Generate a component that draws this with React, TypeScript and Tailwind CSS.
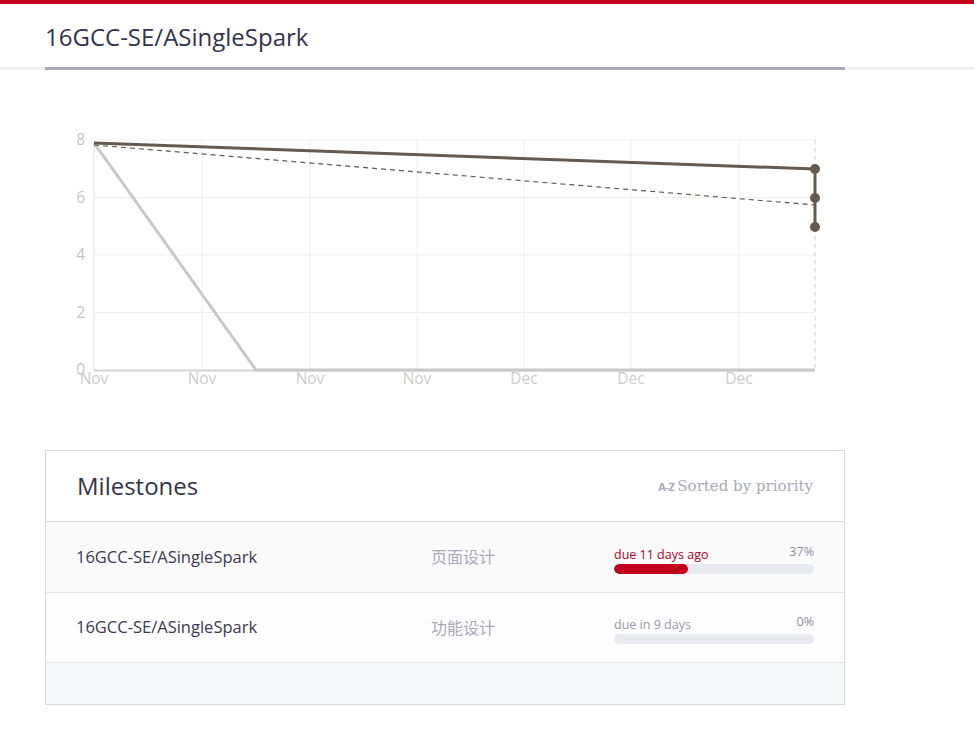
import React from "react";

const milestones = [
  { repo: "16GCC-SE/ASingleSpark", name: "页面设计", due: "due 11 days ago", overdue: true, pct: 37 },
  { repo: "16GCC-SE/ASingleSpark", name: "功能设计", due: "due in 9 days", overdue: false, pct: 0 },
];

// chart coords are page coords minus the svg origin (45, 100)
const X0 = 49;
const X1 = 770;
const yFor = (v: number) => 269 - v * 28.75;
const xTicks = [49, 157, 265, 372, 479, 586, 694];
const xLabels = ["Nov", "Nov", "Nov", "Nov", "Dec", "Dec", "Dec"];

function Burndown() {
  return (
    <svg width={800} height={300} className="block" style={{ fontFamily: "'Open Sans', sans-serif" }}>
      {/* grid */}
      {[8, 6, 4, 2].map((v) => (
        <line key={v} x1={X0} x2={X1} y1={yFor(v)} y2={yFor(v)} stroke="#efefef" strokeWidth={1} />
      ))}
      {xTicks.slice(1).map((x) => (
        <line key={x} x1={x} x2={x} y1={yFor(8)} y2={yFor(0)} stroke="#efefef" strokeWidth={1} />
      ))}
      <line x1={X1} x2={X1} y1={yFor(8)} y2={yFor(0)} stroke="#cfcfcf" strokeWidth={1} strokeDasharray="4 4" />
      {/* axes */}
      <line x1={X0} x2={X0} y1={yFor(8)} y2={yFor(0)} stroke="#e4e4e4" strokeWidth={1} />
      <line x1={X0} x2={X1} y1={yFor(0) + 0.5} y2={yFor(0) + 0.5} stroke="#d4d4d4" strokeWidth={2} />
      {/* y labels */}
      {[8, 6, 4, 2, 0].map((v) => (
        <text key={v} x={40} y={yFor(v) + 5} textAnchor="end" fontSize={15.5} fill="#c6c6c6">
          {v}
        </text>
      ))}
      {/* x labels */}
      {xTicks.map((x, i) => (
        <text key={x} x={x} y={283} textAnchor="middle" fontSize={15.5} fill="#cdcdcd">
          {xLabels[i]}
        </text>
      ))}
      {/* actual (light) */}
      <polyline points={`${X0},${yFor(7.9)} 211,${yFor(0)} ${X1},${yFor(0)}`} fill="none" stroke="#c9c9c9" strokeWidth={3} />
      {/* ideal dashed */}
      <line x1={X0} y1={44} x2={X1} y2={104} stroke="#645a50" strokeWidth={1.2} strokeDasharray="5 4" />
      {/* scope line */}
      <line x1={X0} y1={42} x2={X1} y2={68} stroke="#645a50" strokeWidth={3} />
      <line x1={X1} y1={68} x2={X1} y2={126} stroke="#645a50" strokeWidth={3} />
      {[68, 97, 126].map((y) => (
        <circle key={y} cx={X1} cy={y} r={5} fill="#645a50" />
      ))}
    </svg>
  );
}

export default function App() {
  return (
    <div className="min-h-screen bg-white" style={{ fontFamily: "'Open Sans', 'Noto Sans CJK SC', sans-serif" }}>
      <div className="h-[4px] bg-[#c3001c]" />
      <div className="border-b-[3px] border-[#f1f1f5]">
        <div className="ml-[45px] w-[800px] h-[66px] -mb-[3px] border-b-[3px] border-[#a9abb8] flex items-center">
          <h1 className="text-[24px] leading-[32px] text-[#34344a] mt-[3px]">16GCC-SE/ASingleSpark</h1>
        </div>
      </div>

      <div className="ml-[45px] mt-[31px]">
        <Burndown />
      </div>

      <div className="ml-[45px] mt-[49px] w-[800px] border border-[#d6d8e1] mb-[40px]">
        <div className="h-[71px] flex items-center justify-between px-[31px] border-b border-[#d6d8e1]">
          <h2 className="text-[24px] text-[#34344a]">Milestones</h2>
          <div className="flex items-baseline gap-[3px] text-[#a9abb8]">
            <span className="text-[11px] font-bold tracking-[-0.5px]">A-Z</span>
            <span className="text-[15px]" style={{ fontFamily: "'DejaVu Serif', serif" }}>
              Sorted by priority
            </span>
          </div>
        </div>
        {milestones.map((m, i) => (
          <div
            key={i}
            className={`flex items-center border-b border-[#e5e6ec] pl-[30px] pr-[30px] ${
              i === 0 ? "h-[71px] bg-[#fafafb]" : "h-[70px] bg-[#fdfdfe]"
            }`}
          >
            <div className="w-[355px] text-[16.5px] text-[#3a3a50]">{m.repo}</div>
            <div className="w-[183px] text-[16px] text-[#a9abb8]">{m.name}</div>
            <div className="w-[200px] mt-[6px]">
              <div className="flex justify-between items-end text-[12.5px] leading-[16px]">
                <span className={m.overdue ? "text-[#b0001c]" : "text-[#9a9cab]"}>{m.due}</span>
                <span className="text-[#8e90a0] -mt-[3px] self-start">{m.pct}%</span>
              </div>
              <div className="h-[10px] rounded-full bg-[#e9eaef] mt-[1px] overflow-hidden">
                <div className="h-full rounded-full bg-[#c3001c]" style={{ width: `${m.pct}%` }} />
              </div>
            </div>
          </div>
        ))}
        <div className="h-[41px] bg-[#f7f8fa]" />
      </div>
    </div>
  );
}
